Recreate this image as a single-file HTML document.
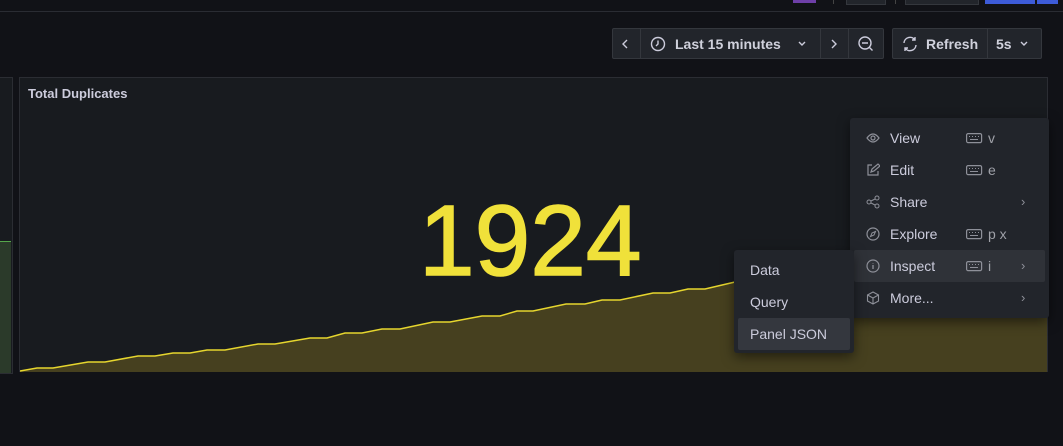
<!DOCTYPE html>
<html><head><style>
body{margin:0;width:1063px;height:446px;background:#111217;overflow:hidden;position:relative;font-family:"Liberation Sans",sans-serif;color:#ccccdc}
.a{position:absolute}
.btn{position:absolute;top:28px;height:31px;background:#22252b;border:1px solid #34373d;box-sizing:border-box;border-radius:2px}
.mi{position:absolute;left:4px;width:191px;height:32px;font-size:14px;line-height:32px;color:#ccccdc}
.mi .t{position:absolute;left:36px}
.mi .k{position:absolute;left:134px;color:#9fa1a8}
.mi .kb{position:absolute;left:112px;top:11px}
.mi .c{position:absolute;left:167px;color:#8e9099;font-size:13px}
.ic{position:absolute;left:12px;top:9px}
</style></head><body>
<div class="a" style="left:0;top:11px;width:1063px;height:1px;background:#2a2c33"></div>
<div class="a" style="left:793px;top:0;width:23px;height:3px;background:#6e3fa8"></div>
<div class="a" style="left:833px;top:0;width:1px;height:4px;background:#444"></div>
<div class="a" style="left:846px;top:0;width:38px;height:4px;border:1px solid #34373d;border-top:0;background:#22252b"></div>
<div class="a" style="left:895px;top:0;width:1px;height:4px;background:#444"></div>
<div class="a" style="left:905px;top:0;width:72px;height:4px;border:1px solid #34373d;border-top:0;background:#22252b"></div>
<div class="a" style="left:985px;top:0;width:50px;height:4px;background:#3d5bd8"></div>
<div class="a" style="left:1037px;top:0;width:21px;height:4px;background:#3d5bd8"></div>

<div class="btn" style="left:612px;width:272px"></div>
<div class="a" style="left:640px;top:29px;width:1px;height:29px;background:#34373d"></div>
<div class="a" style="left:820px;top:29px;width:1px;height:29px;background:#34373d"></div>
<div class="a" style="left:848px;top:29px;width:1px;height:29px;background:#34373d"></div>
<svg class="a" style="left:620px;top:38px" width="10" height="12"><path d="M7 2L3 6l4 4" fill="none" stroke="#ccccdc" stroke-width="1.4"/></svg>
<svg class="a" style="left:650px;top:36px" width="16" height="16"><circle cx="8" cy="8" r="6.5" fill="none" stroke="#ccccdc" stroke-width="1.4"/><path d="M8 4.5V8L6 10" fill="none" stroke="#ccccdc" stroke-width="1.4"/></svg>
<div class="a" style="left:675px;top:36px;font-size:14px;font-weight:bold;color:#d0d1dc">Last 15 minutes</div>
<svg class="a" style="left:797px;top:40px" width="10" height="8"><path d="M2 2l3 3 3-3" fill="none" stroke="#ccccdc" stroke-width="1.4"/></svg>
<svg class="a" style="left:829px;top:38px" width="10" height="12"><path d="M3 2l4 4-4 4" fill="none" stroke="#ccccdc" stroke-width="1.4"/></svg>
<svg class="a" style="left:857px;top:35px" width="18" height="18"><circle cx="8" cy="8" r="6" fill="none" stroke="#ccccdc" stroke-width="1.4"/><path d="M5 8h6M12.5 12.5l3 3" stroke="#ccccdc" stroke-width="1.4"/></svg>

<div class="btn" style="left:892px;width:150px"></div>
<div class="a" style="left:987px;top:29px;width:1px;height:29px;background:#34373d"></div>
<svg class="a" style="left:901px;top:35px" width="18" height="18"><path d="M3 8a6 6 0 0 1 11-3M15 10a6 6 0 0 1-11 3M14 2v3h-3M4 16v-3h3" fill="none" stroke="#ccccdc" stroke-width="1.4"/></svg>
<div class="a" style="left:926px;top:36px;font-size:14px;font-weight:bold;color:#d0d1dc">Refresh</div>
<div class="a" style="left:996px;top:36px;font-size:14px;font-weight:bold;color:#d0d1dc">5s</div>
<svg class="a" style="left:1019px;top:40px" width="10" height="8"><path d="M2 2l3 3 3-3" fill="none" stroke="#ccccdc" stroke-width="1.4"/></svg>

<div class="a" style="left:-2px;top:77px;width:13px;height:295px;background:#181b1f;border:1px solid #2b2d33"></div>
<div class="a" style="left:0;top:241px;width:11px;height:131px;background:#2b3a2a;border-top:1px solid #56a64b"></div>

<div class="a" style="left:19px;top:77px;width:1029px;height:295px;background:#181b1f;border:1px solid #2b2d33;box-sizing:border-box"></div>
<div class="a" style="left:28px;top:86px;font-size:13px;font-weight:bold;color:#ccccdc">Total Duplicates</div>
<svg class="a" style="left:20px;top:78px" width="1027" height="294">
<path d="M0 293 L17 290 L33 290 L68 284 L85 284 L118 278 L135 278 L153 275 L170 275 L187 272 L205 272 L238 266 L255 266 L290 260 L307 260 L325 255 L342 255 L362 251 L380 251 L413 244 L430 244 L462 238 L480 238 L497 233 L513 233 L546 226 L565 226 L582 222 L600 222 L633 215 L650 215 L668 211 L685 211 L715 204 L750 198 L790 192 L830 186 L870 180 L1027 170 L1027 294 L0 294Z" fill="#46401f"/>
<path d="M0 293 L17 290 L33 290 L68 284 L85 284 L118 278 L135 278 L153 275 L170 275 L187 272 L205 272 L238 266 L255 266 L290 260 L307 260 L325 255 L342 255 L362 251 L380 251 L413 244 L430 244 L462 238 L480 238 L497 233 L513 233 L546 226 L565 226 L582 222 L600 222 L633 215 L650 215 L668 211 L685 211 L715 204 L750 198 L790 192 L830 186 L870 180 L1027 170" fill="none" stroke="#e6d62e" stroke-width="1.5"/>
</svg>
<div class="a" style="left:419px;top:186px;font-size:100px;line-height:110px;color:#f0e13a;-webkit-text-stroke:1.5px #f0e13a">1924</div>

<svg width="0" height="0" style="position:absolute"><defs><g id="kb"><rect x="0.6" y="0.6" width="15" height="9" rx="1.5" fill="none" stroke="#8e9099" stroke-width="1.2"/><path d="M3 3.5h1M6 3.5h1M9 3.5h1M12 3.5h1M4 6.5h8" stroke="#8e9099" stroke-width="1.1"/></g></defs></svg>

<div class="a" style="left:850px;top:118px;width:199px;height:200px;background:#22252b;border-radius:3px;box-shadow:0 4px 12px rgba(0,0,0,.5)">
 <div class="mi" style="top:4px"><svg class="ic" width="14" height="14"><path d="M1 7q6-8 12 0q-6 8-12 0z" fill="none" stroke="#8e9099" stroke-width="1.2"/><circle cx="7" cy="7" r="2" fill="none" stroke="#8e9099" stroke-width="1.2"/></svg><span class="t">View</span><svg class="kb" width="17" height="11"><use href="#kb"/></svg><span class="k">v</span></div>
 <div class="mi" style="top:36px"><svg class="ic" width="14" height="14"><path d="M6 2H2v10h10V8M5 9l1-3 6-5 2 2-6 5z" fill="none" stroke="#8e9099" stroke-width="1.2"/></svg><span class="t">Edit</span><svg class="kb" width="17" height="11"><use href="#kb"/></svg><span class="k">e</span></div>
 <div class="mi" style="top:68px"><svg class="ic" width="14" height="14"><circle cx="3" cy="7" r="2" fill="none" stroke="#8e9099"/><circle cx="11" cy="3" r="2" fill="none" stroke="#8e9099"/><circle cx="11" cy="11" r="2" fill="none" stroke="#8e9099"/><path d="M5 6l4-2M5 8l4 2" stroke="#8e9099"/></svg><span class="t">Share</span><span class="c">&rsaquo;</span></div>
 <div class="mi" style="top:100px"><svg class="ic" width="14" height="14"><circle cx="7" cy="7" r="6" fill="none" stroke="#8e9099" stroke-width="1.2"/><path d="M9.5 4.5L8 8 4.5 9.5 6 6z" fill="none" stroke="#8e9099"/></svg><span class="t">Explore</span><svg class="kb" width="17" height="11"><use href="#kb"/></svg><span class="k">p x</span></div>
 <div class="mi" style="top:132px;background:#2f3238;border-radius:2px"><svg class="ic" width="14" height="14"><circle cx="7" cy="7" r="6" fill="none" stroke="#8e9099" stroke-width="1.2"/><path d="M7 6v4M7 4v.5" stroke="#8e9099" stroke-width="1.3"/></svg><span class="t">Inspect</span><svg class="kb" width="17" height="11"><use href="#kb"/></svg><span class="k">i</span><span class="c">&rsaquo;</span></div>
 <div class="mi" style="top:164px"><svg class="ic" width="14" height="14"><path d="M7 1l5.5 3v6L7 13 1.5 10V4zM1.5 4L7 7l5.5-3M7 7v6" fill="none" stroke="#8e9099" stroke-width="1.1"/></svg><span class="t">More...</span><span class="c">&rsaquo;</span></div>
</div>

<div class="a" style="left:734px;top:250px;width:120px;height:103px;background:#22252b;border-radius:3px;box-shadow:0 4px 12px rgba(0,0,0,.5)">
 <div class="a" style="left:16px;top:4px;line-height:32px;font-size:14px">Data</div>
 <div class="a" style="left:16px;top:36px;line-height:32px;font-size:14px">Query</div>
 <div class="a" style="left:4px;top:68px;width:112px;height:32px;background:#34373e;border-radius:2px"></div>
 <div class="a" style="left:16px;top:68px;line-height:32px;font-size:14px">Panel JSON</div>
</div>
</body></html>
